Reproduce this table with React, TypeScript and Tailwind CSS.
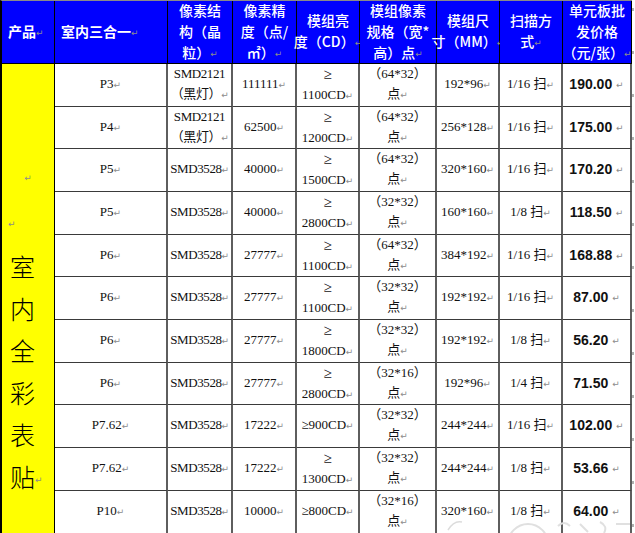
import React from "react";

type Row = {
  p: string;
  chip: string[];
  density: string;
  bright: string[];
  spec: string[];
  size: string;
  scan: string;
  price: string;
};

const rows: Row[] = [
  { p: "P3", chip: ["SMD2121", "（黑灯）"], density: "111111", bright: ["≥", "1100CD"], spec: ["（64*32）", "点"], size: "192*96", scan: "1/16 扫", price: "190.00" },
  { p: "P4", chip: ["SMD2121", "（黑灯）"], density: "62500", bright: ["≥", "1200CD"], spec: ["（64*32）", "点"], size: "256*128", scan: "1/16 扫", price: "175.00" },
  { p: "P5", chip: ["SMD3528"], density: "40000", bright: ["≥", "1500CD"], spec: ["（64*32）", "点"], size: "320*160", scan: "1/16 扫", price: "170.20" },
  { p: "P5", chip: ["SMD3528"], density: "40000", bright: ["≥", "2800CD"], spec: ["（32*32）", "点"], size: "160*160", scan: "1/8 扫", price: "118.50" },
  { p: "P6", chip: ["SMD3528"], density: "27777", bright: ["≥", "1100CD"], spec: ["（64*32）", "点"], size: "384*192", scan: "1/16 扫", price: "168.88" },
  { p: "P6", chip: ["SMD3528"], density: "27777", bright: ["≥", "1100CD"], spec: ["（32*32）", "点"], size: "192*192", scan: "1/16 扫", price: "87.00" },
  { p: "P6", chip: ["SMD3528"], density: "27777", bright: ["≥", "1800CD"], spec: ["（32*32）", "点"], size: "192*192", scan: "1/8 扫", price: "56.20" },
  { p: "P6", chip: ["SMD3528"], density: "27777", bright: ["≥", "2800CD"], spec: ["（32*16）", "点"], size: "192*96", scan: "1/4 扫", price: "71.50" },
  { p: "P7.62", chip: ["SMD3528"], density: "17222", bright: ["≥900CD"], spec: ["（32*32）", "点"], size: "244*244", scan: "1/16 扫", price: "102.00" },
  { p: "P7.62", chip: ["SMD3528"], density: "17222", bright: ["≥", "1300CD"], spec: ["（32*32）", "点"], size: "244*244", scan: "1/8 扫", price: "53.66" },
  { p: "P10", chip: ["SMD3528"], density: "10000", bright: ["≥800CD"], spec: ["（32*16）", "点"], size: "320*160", scan: "1/8 扫", price: "64.00" },
];

const Mark = () => (
  <span className="text-[9px] text-[#8c8c8c] font-normal align-middle font-['DejaVu_Sans',sans-serif]">↵</span>
);

const SERIF = "font-['Liberation_Serif','Noto_Sans_CJK_SC',serif]";

function Lines({ lines }: { lines: string[] }) {
  return (
    <>
      {lines.map((l, i) => (
        <div key={i} className="whitespace-nowrap">
          {l === "≥" ? <span className="text-[15px]">≥</span> : l}
          {i === lines.length - 1 && <Mark />}
        </div>
      ))}
    </>
  );
}

function HeadCell({ lines, bold, left }: { lines: string[]; bold?: boolean; left?: boolean }) {
  return (
    <div
      className={`flex flex-col justify-center border-r border-b border-black bg-[#0000ff] text-white text-[14px] leading-[21px] ${
        left ? "items-start pl-[6px]" : "items-center text-center"
      } ${bold ? "font-bold" : "font-medium"}`}
    >
      <Lines lines={lines} />
    </div>
  );
}

function Cell({ children, bold }: { children: React.ReactNode; bold?: boolean }) {
  return (
    <div
      className={`flex flex-col items-center justify-center text-center whitespace-nowrap border-r-2 border-r-[#5e5e5e] border-b border-b-[#3a3a3a] bg-white text-[#111] ${
        bold
          ? "font-bold text-[14px] leading-[20px] font-['Liberation_Sans',sans-serif]"
          : `text-[13px] leading-[20px] ${SERIF}`
      }`}
    >
      {children}
    </div>
  );
}

export default function App() {
  return (
    <div className="relative w-[635px] h-[533px] overflow-hidden bg-white font-['Noto_Sans_CJK_SC',sans-serif]">
      <div className="flex">
        <div className="border-l-2 border-t border-l-black border-t-[#8a8a8a]">
          <div className="grid grid-cols-[53px_113px_65px_64px_63px_77px_63px_63px_69px] grid-rows-[63px_43px_42px_43px_43px_42px_43px_43px_42px_43px_43px_43px]">
            <HeadCell lines={["产品"]} bold left />
            <HeadCell lines={["室内三合一"]} bold left />
            <HeadCell lines={["像素结", "构（晶", "粒）"]} />
            <HeadCell lines={["像素精", "度（点/", "㎡）"]} />
            <HeadCell lines={["模组亮", "度（CD）"]} />
            <HeadCell lines={["模组像素", "规格（宽*", "高）点"]} />
            <HeadCell lines={["模组尺", "寸（MM）"]} />
            <HeadCell lines={["扫描方", "式"]} />
            <HeadCell lines={["单元板批", "发价格", "（元/张）"]} />

            <div className="row-span-11 bg-[#ffff00] border-r border-black flex flex-col pt-[89px] text-[25px] leading-[42px] text-black font-light">
              <div className="text-center"><Mark /></div>
              <div className="pl-[6px]"><Mark /></div>
              {["室", "内", "全", "彩", "表"].map((c) => (
                <div key={c} className="pl-[8px]">{c}</div>
              ))}
              <div className="pl-[8px]">贴<Mark /></div>
            </div>

            {rows.map((r, i) => (
              <React.Fragment key={i}>
                <Cell><div>{r.p}<Mark /></div></Cell>
                <Cell><div className="tracking-[-0.4px]"><Lines lines={r.chip} /></div></Cell>
                <Cell><div>{r.density}<Mark /></div></Cell>
                <Cell><Lines lines={r.bright} /></Cell>
                <Cell><Lines lines={r.spec} /></Cell>
                <Cell><div>{r.size}<Mark /></div></Cell>
                <Cell><div>{r.scan}<Mark /></div></Cell>
                <Cell bold><div>{r.price} <Mark /></div></Cell>
              </React.Fragment>
            ))}
          </div>
        </div>
        <div className="w-[3px] flex flex-col pt-[8px] gap-[40px] overflow-hidden">
          {Array.from({ length: 13 }).map((_, i) => (
            <div key={i} className="w-[2px] h-[3px] bg-[#b0b0b0]" />
          ))}
        </div>
      </div>
      <svg className="absolute left-[440px] top-[512px] pointer-events-none" width="195" height="21" viewBox="0 0 195 21">
        <path d="M8 18 Q14 8 22 10" stroke="#dcdcdc" strokeWidth="1.5" fill="none" />
        <circle cx="88" cy="32" r="20" stroke="#e0e0e0" strokeWidth="2" fill="none" />
        <path d="M118 14 q6 -6 12 0 M140 12 l8 8 M160 10 q8 4 4 11 M176 12 l14 0" stroke="#e0e0e0" strokeWidth="2" fill="none" />
      </svg>
    </div>
  );
}
